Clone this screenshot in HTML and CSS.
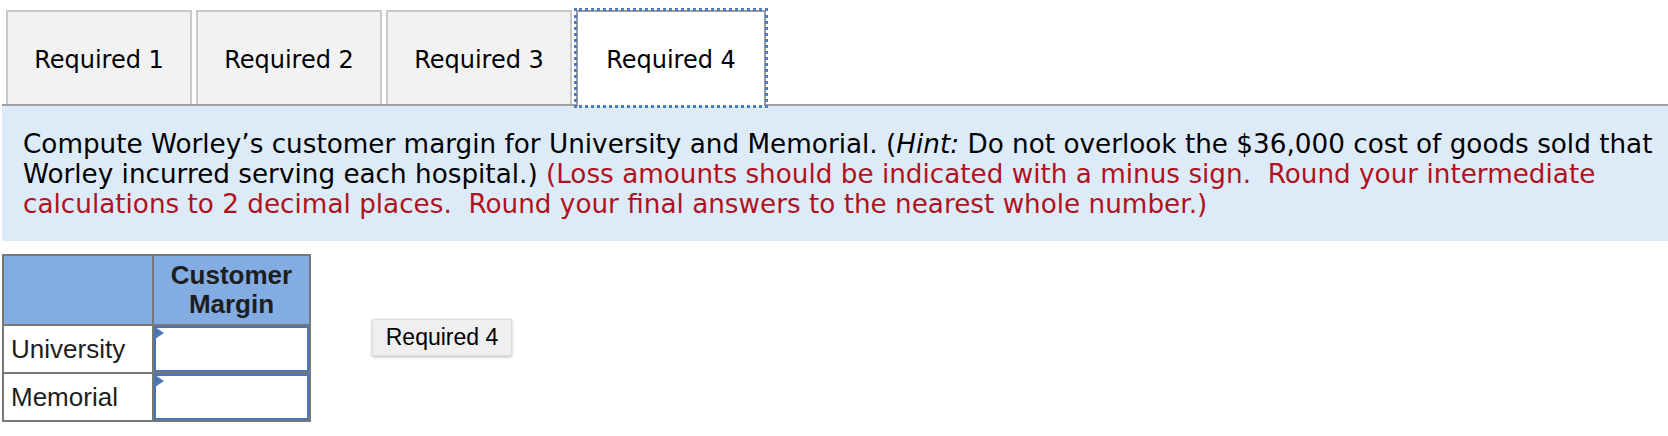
FILE: index.html
```html
<!DOCTYPE html>
<html lang="en">
<head>
<meta charset="utf-8">
<title>Required 4</title>
<link rel="stylesheet" href="styles.css">
</head>
<body>
<div class="page">
  <div class="tabs">
    <div class="tab">Required 1</div>
    <div class="tab">Required 2</div>
    <div class="tab">Required 3</div>
    <div class="tab active">Required 4</div>
  </div>
  <div class="panel">
    <p class="question">Compute Worley’s customer margin for University and Memorial. (<i>Hint:</i> Do not overlook the $36,000 cost of goods sold that Worley incurred serving each hospital.) <span class="note">(Loss amounts should be indicated with a minus sign.&nbsp; Round your intermediate calculations to 2 decimal places.&nbsp; Round your final answers to the nearest whole number.)</span></p>
  </div>
  <div class="work">
    <table class="grid">
      <thead>
        <tr>
          <th class="corner"></th>
          <th class="head">Customer<br>Margin</th>
        </tr>
      </thead>
      <tbody>
        <tr>
          <td class="label">University</td>
          <td class="cell"><div class="entry"><input type="text" aria-label="University customer margin"></div></td>
        </tr>
        <tr>
          <td class="label">Memorial</td>
          <td class="cell"><div class="entry"><input type="text" aria-label="Memorial customer margin"></div></td>
        </tr>
      </tbody>
    </table>
    <button class="nav" type="button">Required 4</button>
  </div>
</div>
</body>
</html>
```

FILE: styles.css
```css
html, body {
  margin: 0;
  padding: 0;
  background: #ffffff;
}

.page {
  padding: 10px 0 0 2px;
}

.tabs {
  display: flex;
  align-items: flex-end;
  gap: 4px;
  padding-left: 4px;
  position: relative;
  z-index: 1;
}

.tab {
  box-sizing: border-box;
  width: 186px;
  height: 94px;
  padding-top: 4px;
  display: flex;
  align-items: center;
  justify-content: center;
  background: #f2f2f2;
  border: 2px solid #c9c9c9;
  border-bottom: 0;
  font-family: "DejaVu Sans", Verdana, sans-serif;
  font-size: 24px;
  color: #000;
}

.tab.active {
  width: 190px;
  height: 96px;
  padding-top: 2px;
  margin-bottom: -2px;
  background: #ffffff;
  border-color: #9a9a9a;
  outline: 3px dotted #4a7cc7;
  outline-offset: -1px;
}

.panel {
  background: #ddebf8;
  border-top: 2px solid #a0a0a0;
  padding: 23px 8px 22px 21px;
}

.question {
  margin: 0;
  font-family: "DejaVu Sans", Verdana, sans-serif;
  font-size: 26.25px;
  line-height: 30px;
  color: #000;
}

.note {
  color: #b0121d;
}

.work {
  display: flex;
  align-items: flex-start;
  margin-top: 13px;
}

.grid {
  border-collapse: collapse;
  border: 2px solid #777;
  font-family: "Liberation Sans", Arial, sans-serif;
}

.grid th,
.grid td {
  border: 2px solid #777;
  padding: 0;
}

.grid thead th {
  background: #83ade2;
  height: 68px;
}

.corner {
  width: 148px;
}

.head {
  width: 155px;
  font-size: 26px;
  font-weight: bold;
  line-height: 29px;
  color: #1e1e1e;
  text-align: center;
  padding-bottom: 4px;
}

.label {
  height: 46px;
  padding: 0 0 0 7px !important;
  font-size: 26px;
  color: #1e1e1e;
  text-align: left;
}

.cell {
  vertical-align: top;
}

.entry {
  position: relative;
}

.entry::before {
  content: "";
  position: absolute;
  left: 1px;
  top: 1px;
  border-left: 9px solid #4a76b8;
  border-top: 6px solid transparent;
  border-bottom: 6px solid transparent;
}

.entry input {
  display: block;
  box-sizing: border-box;
  width: 100%;
  height: 46px;
  margin: 0;
  border: 2px solid #4a76b8;
  background: #fff;
  outline: none;
  font-family: "Liberation Sans", Arial, sans-serif;
  font-size: 20px;
}

.nav {
  margin: 65px 0 0 61px;
  box-sizing: border-box;
  width: 140px;
  height: 37px;
  padding: 0;
  background: #efefef;
  border: 1px solid #dedede;
  border-radius: 2px;
  box-shadow: 0 1px 3px rgba(0, 0, 0, 0.28);
  font-family: "Liberation Sans", Arial, sans-serif;
  font-size: 23px;
  color: #000;
}
```
